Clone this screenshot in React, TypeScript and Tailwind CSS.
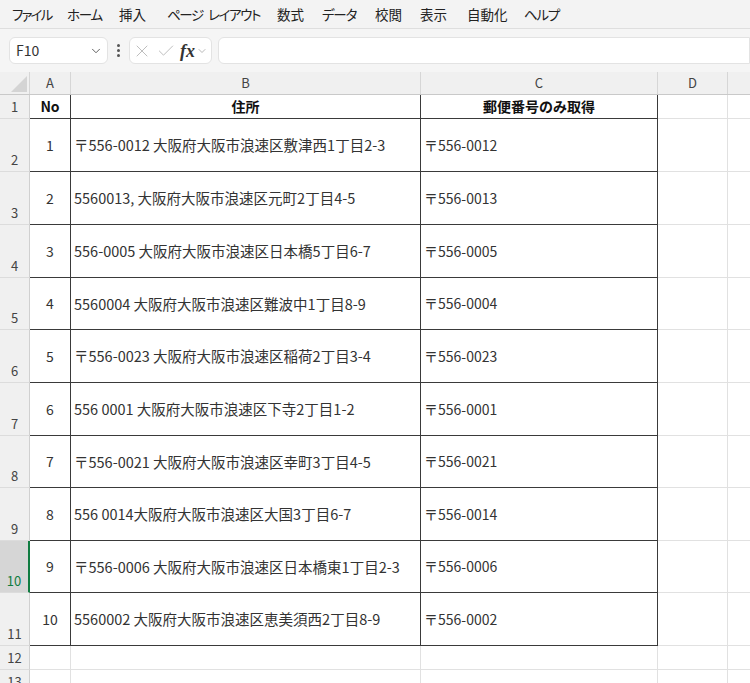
import React from "react";
import { ChevronDown, X, Check } from "lucide-react";

const FONT = "font-['Noto_Sans_CJK_JP','Noto_Sans',sans-serif]";

// menu labels with their slot widths (taken from the ribbon tab spacing)
const menus = [
  { t: "ファイル", w: "w-[55px] tracking-[-1.8px]" },
  { t: "ホーム", w: "w-[52px] tracking-[-1.2px]" },
  { t: "挿入", w: "w-[48px]" },
  { t: "ページ\u2002レイアウト", w: "w-[110px] tracking-[-1.4px]" },
  { t: "数式", w: "w-[45px]" },
  { t: "データ", w: "w-[53px] tracking-[-1.2px]" },
  { t: "校閲", w: "w-[45px]" },
  { t: "表示", w: "w-[47px]" },
  { t: "自動化", w: "w-[57px]" },
  { t: "ヘルプ", w: "w-[60px] tracking-[-1.2px]" },
];

const rows = [
  { no: 1, addr: "〒556-0012 大阪府大阪市浪速区敷津西1丁目2-3", zip: "〒556-0012", h: "h-[53px]" },
  { no: 2, addr: "5560013, 大阪府大阪市浪速区元町2丁目4-5", zip: "〒556-0013", h: "h-[53px]" },
  { no: 3, addr: "556-0005 大阪府大阪市浪速区日本橋5丁目6-7", zip: "〒556-0005", h: "h-[53px]" },
  { no: 4, addr: "5560004 大阪府大阪市浪速区難波中1丁目8-9", zip: "〒556-0004", h: "h-[52px]" },
  { no: 5, addr: "〒556-0023 大阪府大阪市浪速区稲荷2丁目3-4", zip: "〒556-0023", h: "h-[53px]" },
  { no: 6, addr: "556 0001 大阪府大阪市浪速区下寺2丁目1-2", zip: "〒556-0001", h: "h-[53px]" },
  { no: 7, addr: "〒556-0021 大阪府大阪市浪速区幸町3丁目4-5", zip: "〒556-0021", h: "h-[52px]" },
  { no: 8, addr: "556 0014大阪府大阪市浪速区大国3丁目6-7", zip: "〒556-0014", h: "h-[53px]" },
  { no: 9, addr: "〒556-0006 大阪府大阪市浪速区日本橋東1丁目2-3", zip: "〒556-0006", h: "h-[52px]" },
  { no: 10, addr: "5560002 大阪府大阪市浪速区恵美須西2丁目8-9", zip: "〒556-0002", h: "h-[53px]" },
];

// row header cell (number at the bottom, like Excel)
const RowHead = ({ n, selected }: { n: number; selected?: boolean }) => (
  <div
    className={`w-[30px] shrink-0 flex items-end justify-center pb-[2px] text-[13px] border-b border-[#dcdcdc] ${
      selected
        ? "bg-[#d6d6d6] text-[#107c41] border-r-2 border-r-[#107c41]"
        : "bg-[#f0f0f0] text-[#444] border-r border-r-[#d0d0d0]"
    }`}
  >
    {n}
  </div>
);

export default function App() {
  return (
    <div className={`w-[750px] h-[683px] overflow-hidden bg-white text-[#333] ${FONT}`}>
      {/* menu bar */}
      <div className="h-[29px] bg-[#f3f3f3] border-b border-[#dedede] flex items-center pl-[12px] text-[13.5px] text-[#222] [font-feature-settings:'palt']">
        {menus.map((m) => (
          <span key={m.t} className={`${m.w} shrink-0 whitespace-nowrap`}>
            {m.t}
          </span>
        ))}
      </div>

      {/* formula bar */}
      <div className="h-[43px] bg-[#f5f5f5] flex items-center pl-[9px]">
        <div className="w-[99px] h-[27px] bg-white border border-[#e3e3e3] rounded-md flex items-center justify-between pl-[6px] pr-[4px]">
          <span className="text-[14px] text-[#333]">F10</span>
          <ChevronDown size={14} className="text-[#555]" strokeWidth={1.6} />
        </div>
        <div className="ml-[5px] w-[10px] flex flex-col items-center gap-[2px]">
          <span className="w-[3px] h-[3px] rounded-full bg-[#555]" />
          <span className="w-[3px] h-[3px] rounded-full bg-[#555]" />
          <span className="w-[3px] h-[3px] rounded-full bg-[#555]" />
        </div>
        <div className="ml-[6px] w-[83px] h-[27px] bg-white border border-[#e3e3e3] rounded-md flex items-center pl-[2px] gap-[4px] text-[#b8b8b8]">
          <X size={20} strokeWidth={1.1} />
          <Check size={20} strokeWidth={1.1} />
          <span className="flex items-center">
            <span className="font-['Liberation_Serif',serif] italic font-semibold text-[18px] text-[#333] leading-none">fx</span>
            <ChevronDown size={12} strokeWidth={1.4} className="text-[#999] ml-[1px]" />
          </span>
        </div>
        <div className="ml-[6px] flex-1 h-[27px] bg-white border border-[#e3e3e3] rounded-l-md" />
      </div>

      {/* column headers */}
      <div className="h-[23px] flex bg-[#f0f0f0] border-b border-[#c9c9c9] text-[13px] text-[#444]">
        <div className="w-[30px] shrink-0 relative border-r border-[#d6d6d6]">
          <div className="absolute right-[2px] bottom-[2px] w-0 h-0 border-l-[16px] border-l-transparent border-b-[16px] border-b-[#d4d4d4]" />
        </div>
        <div className="w-[41px] shrink-0 flex items-center justify-center border-r border-[#d6d6d6]">A</div>
        <div className="w-[350px] shrink-0 flex items-center justify-center border-r border-[#d6d6d6]">B</div>
        <div className="w-[237px] shrink-0 flex items-center justify-center border-r border-[#d6d6d6]">C</div>
        <div className="w-[70px] shrink-0 flex items-center justify-center border-r border-[#d6d6d6]">D</div>
        <div className="flex-1" />
      </div>

      {/* row 1: headers */}
      <div className="h-[24px] flex text-[14px] text-[#111]">
        <RowHead n={1} />
        <div className="w-[41px] shrink-0 flex items-center justify-center font-bold border-r border-b border-[#3a3a3a]">No</div>
        <div className="w-[350px] shrink-0 flex items-center justify-center font-bold border-r border-b border-[#3a3a3a]">住所</div>
        <div className="w-[237px] shrink-0 flex items-center justify-center font-bold border-r border-b border-[#3a3a3a]">郵便番号のみ取得</div>
        <div className="w-[70px] shrink-0 border-r border-b border-[#e1e1e1]" />
        <div className="flex-1 border-b border-[#e1e1e1]" />
      </div>

      {rows.map((r) => (
        <div key={r.no} className={`${r.h} flex text-[14px]`}>
          <RowHead n={r.no + 1} selected={r.no === 9} />
          <div className="w-[41px] shrink-0 flex items-center justify-center border-r border-b border-[#3a3a3a]">{r.no}</div>
          <div className="w-[350px] shrink-0 flex items-center pl-[3px] border-r border-b border-[#3a3a3a] whitespace-nowrap text-[14.5px]">{r.addr}</div>
          <div className="w-[237px] shrink-0 flex items-center pl-[3px] border-r border-b border-[#3a3a3a]">{r.zip}</div>
          <div className="w-[70px] shrink-0 border-r border-b border-[#e1e1e1]" />
          <div className="flex-1 border-b border-[#e1e1e1]" />
        </div>
      ))}

      {[12, 13].map((n) => (
        <div key={n} className="h-[24px] flex">
          <RowHead n={n} />
          <div className="w-[41px] shrink-0 border-r border-b border-[#e1e1e1]" />
          <div className="w-[350px] shrink-0 border-r border-b border-[#e1e1e1]" />
          <div className="w-[237px] shrink-0 border-r border-b border-[#e1e1e1]" />
          <div className="w-[70px] shrink-0 border-r border-b border-[#e1e1e1]" />
          <div className="flex-1 border-b border-[#e1e1e1]" />
        </div>
      ))}
    </div>
  );
}
